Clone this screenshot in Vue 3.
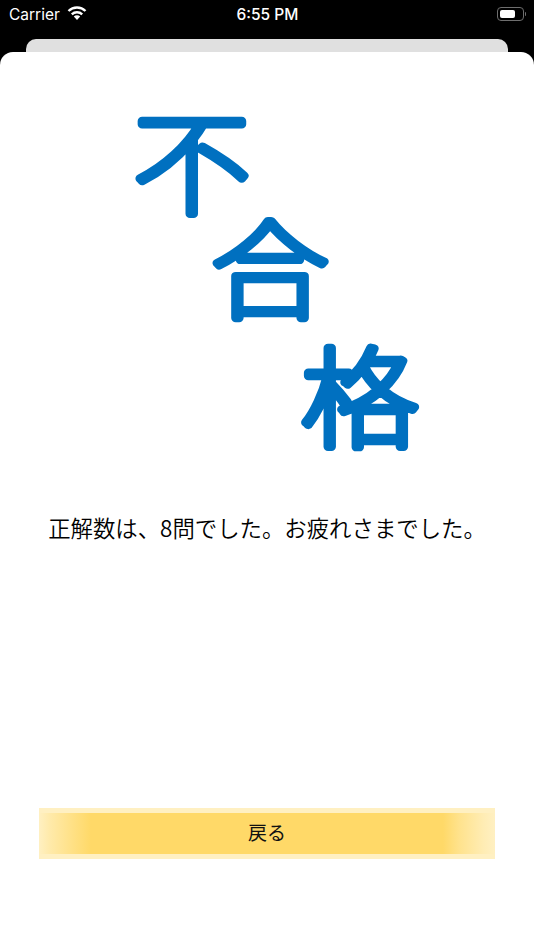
<template>
  <div class="screen">
    <!-- status bar -->
    <div class="status">
      <div class="status-left">
        <span>Carrier</span>
        <svg class="wifi" width="20" height="14" viewBox="0 0 20 14">
          <path d="M1.500 5A12.200 12.200 0 0 1 18.500 5" fill="none" stroke="#fff" stroke-width="2.400"/>
          <path d="M4.800 8.300A7.500 7.500 0 0 1 15.200 8.300" fill="none" stroke="#fff" stroke-width="2.400"/>
          <path d="M10 14L6.800 10.600A4.600 4.600 0 0 1 13.200 10.600Z" fill="#fff"/>
        </svg>
      </div>
      <span class="time">6:55 PM</span>
      <div class="battery">
        <div class="battery-body"><div class="battery-level" :style="{ width: level + '%' }"></div></div>
        <div class="battery-cap"></div>
      </div>
    </div>

    <div class="peek"></div>

    <div class="sheet">
      <div class="stamp">
        <svg class="kanji kanji-1" width="130" height="112" viewBox="0 0 130 112"><text transform="translate(65 96) scale(1 .95)">不</text></svg>
        <svg class="kanji kanji-2" width="130" height="112" viewBox="0 0 130 112"><text transform="translate(65 88) scale(1 .91)">合</text></svg>
        <svg class="kanji kanji-3" width="130" height="116" viewBox="0 0 130 116"><text transform="translate(65 93) scale(1 .93)">格</text></svg>
      </div>

      <p class="message">正解数は、{{ correct }}問でした。お疲れさまでした。</p>

      <button class="back">戻る</button>
    </div>
  </div>
</template>

<script setup>
const correct = 8
const level = 76
</script>

<style>
html, body { margin: 0; background: #000; }
</style>

<style scoped>
.screen {
  width: 534px;
  height: 950px;
  background: #000;
  display: flex;
  flex-direction: column;
  overflow: hidden;
  font-family: "Inter", "Noto Sans CJK JP", sans-serif;
}

.status {
  height: 28px;
  padding: 0 8px 0 9px;
  display: grid;
  grid-template-columns: 1fr auto 1fr;
  align-items: center;
  color: #fff;
  font-size: 15.500px;
}
.status-left { display: flex; align-items: center; gap: 7px; }
.wifi { margin-top: -3px; }
.time { font-weight: 500; }

.battery { justify-self: end; display: flex; align-items: center; gap: 1px; }
.battery-body {
  width: 21px;
  height: 8px;
  border: 1px solid #6e6e6e;
  border-radius: 4px;
  padding: 2px;
}
.battery-level { height: 100%; background: #fff; border-radius: 2px; }
.battery-cap { width: 1.500px; height: 4px; background: #6e6e6e; border-radius: 0 1px 1px 0; }

.peek {
  flex: none;
  height: 13px;
  margin: 11px 26px 0;
  background: #e0e0e0;
  border-radius: 10px 10px 0 0;
}

.sheet {
  flex: 1;
  background: #fff;
  border-radius: 13px 13px 0 0;
  display: flex;
  flex-direction: column;
  font-family: "Noto Sans CJK JP", sans-serif;
}

.stamp {
  height: 409px;
  padding-top: 58px;
  box-sizing: border-box;
  display: flex;
  flex-direction: column;
}
.kanji { display: block; flex: none; overflow: visible; filter: blur(0.4px); }
/* thin glyph + wide round stroke gives the soft rounded lettering */
.kanji text {
  font-size: 117px;
  font-weight: 100;
  text-anchor: middle;
  fill: #0070c0;
  stroke: #0070c0;
  stroke-width: 9px;
  stroke-linejoin: round;
  stroke-linecap: round;
}
.kanji-1 { margin-left: 127px; }
.kanji-2 { margin-left: 205px; }
.kanji-3 { margin-left: 295px; margin-top: 12px; }

.message {
  margin: 42px 0 0;
  text-align: center;
  font-size: 22.400px;
  font-weight: 350;
  line-height: 48px;
  color: #000;
}

.back {
  margin: 257px 39px 0;
  height: 51px;
  border: 0;
  padding: 0 0 4px;
  color: #111;
  font-family: inherit;
  font-size: 19px;
  background:
    linear-gradient(90deg, rgba(255,217,104,0) 0, rgba(255,217,104,.25) 10px, rgba(255,217,104,.7) 35px, #ffd968 52px, #ffd968 404px, rgba(255,217,104,.6) 420px, rgba(255,217,104,.15) 445px, rgba(255,217,104,0) 456px) center / 100% 41px no-repeat,
    #fff0c2;
}
</style>
